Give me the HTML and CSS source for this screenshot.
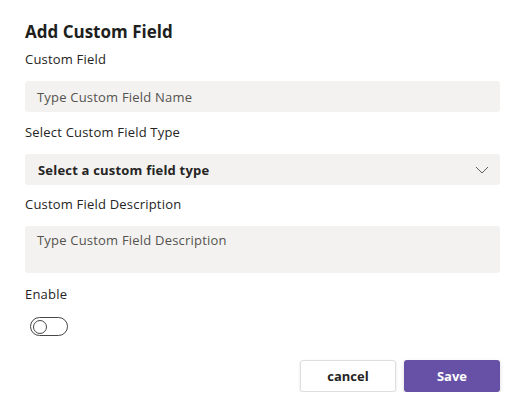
FILE: index.html
```html
<!DOCTYPE html>
<html>
<head>
<meta charset="utf-8">
<link rel="stylesheet" href="styles.css">
</head>
<body>
<div class="dialog">
  <h1 class="title">Add Custom Field</h1>
  <label class="label first">Custom Field</label>
  <div class="input"><span class="ph">Type Custom Field Name</span></div>
  <label class="label">Select Custom Field Type</label>
  <div class="input select">
    <span class="sel">Select a custom field type</span>
    <svg class="chev" width="14" height="8" viewBox="0 0 14 8"><path d="M1 1 L7 7 L13 1" fill="none" stroke="#605e5c" stroke-width="1"/></svg>
  </div>
  <label class="label">Custom Field Description</label>
  <div class="input area"><span class="ph">Type Custom Field Description</span></div>
  <label class="label">Enable</label>
  <div class="toggle"><span class="knob"></span></div>
  <div class="actions">
    <button class="btn cancel">cancel</button>
    <button class="btn save">Save</button>
  </div>
</div>
</body>
</html>
```
FILE: styles.css
```css
* { box-sizing: border-box; }
body {
  margin: 0;
  background: #fff;
  font-family: "Open Sans", "Noto Sans", sans-serif;
  color: #252423;
}
.dialog {
  width: 527px;
  padding: 20px 27px 0 25px;
  display: flex;
  flex-direction: column;
}
.title {
  margin: 0;
  font-size: 17px;
  font-weight: 700;
  line-height: 24px;
  color: #201f1e;
}
.label {
  font-size: 13px;
  line-height: 18px;
  letter-spacing: 0.2px;
  color: #252423;
}
.label.first { margin-top: 6px; }
.input {
  margin-top: 13px;
  height: 31px;
  background: #f3f2f1;
  border-radius: 3px;
  padding: 0 12px;
  display: flex;
  align-items: center;
  margin-bottom: 11px;
}
.ph {
  font-size: 13px;
  letter-spacing: 0.2px;
  color: #55534f;
}
.select { justify-content: space-between; padding: 0 11px 0 13px; margin-bottom: 10px; }
.sel { font-size: 13px; font-weight: 700; letter-spacing: 0.2px; color: #252423; }
.area { height: 47px; align-items: flex-start; padding-top: 5px; margin-bottom: 12px; }
.toggle {
  margin-top: 14px;
  margin-left: 5px;
  width: 38px;
  height: 19px;
  border: 1px solid #484644;
  border-radius: 10px;
  padding: 2px;
  display: flex;
  align-items: center;
}
.knob {
  width: 14px;
  height: 14px;
  border-radius: 50%;
  border: 1px solid #484644;
}
.actions {
  margin-top: 24px;
  display: flex;
  justify-content: flex-end;
  gap: 8px;
}
.btn {
  width: 96px;
  height: 32px;
  border-radius: 3px;
  font-family: "Open Sans", "Noto Sans", sans-serif;
  font-size: 13px;
  font-weight: 700;
  cursor: pointer;
}
.cancel {
  background: #fff;
  color: #252423;
  border: 1px solid #e1dfdd;
  box-shadow: 0 1px 3px rgba(0,0,0,0.1);
}
.save {
  background: #6651a7;
  color: #fff;
  border: none;
  box-shadow: 0 2px 4px rgba(0,0,0,0.15);
}
```
